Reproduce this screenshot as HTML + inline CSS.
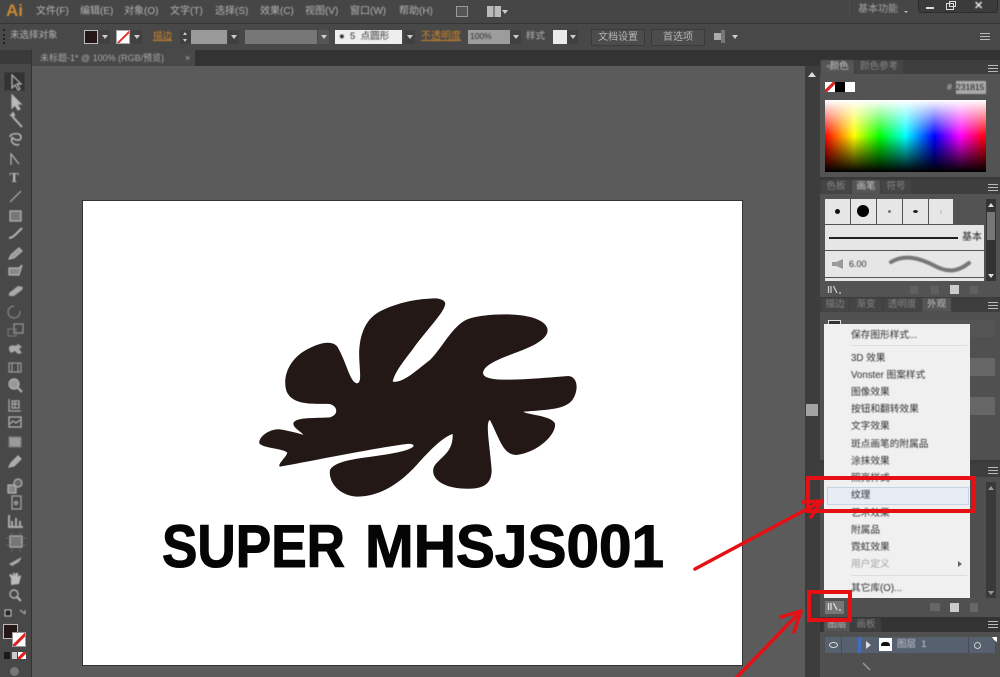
<!DOCTYPE html>
<html lang="zh"><head><meta charset="utf-8"><title>Illustrator</title>
<style>
html,body{margin:0;padding:0;background:#5b5b5b}
#r{position:relative;width:1000px;height:677px;overflow:hidden;background:#5b5b5b;font-family:"Liberation Sans","Noto Sans CJK SC",sans-serif;font-size:10px;color:#b4b4b4}
#r div{position:absolute;box-sizing:border-box}
.t{white-space:nowrap;line-height:12px;filter:blur(.45px)}
.o{color:#c8842c;text-decoration:underline}
.dd{background:#404040;height:14px;width:11px}
.dd:after{content:"";position:absolute;left:3px;top:5px;border:3px solid transparent;border-top:4px solid #ccc;border-bottom:0}
.m{left:851px;color:#2e2e2e;font-size:9.7px;white-space:nowrap;line-height:12px;filter:blur(.4px)}
.tab{height:14px;line-height:14px;text-align:center;color:#848484;font-size:9.5px;background:#454545;filter:blur(.4px)}
.on{background:#555;color:#c4c4c4}
.ml{width:10px;height:7px;border-top:1px solid #bbb;border-bottom:1px solid #bbb}
.ml:after{content:"";position:absolute;left:0;right:0;top:2px;height:1px;background:#bbb}
.btn{height:17px;background:#4c4c4c;border:1px solid #3a3a3a;text-align:center;line-height:15px;color:#b4b4b4;font-size:10px}
.cell{background:#e6e6e6}
</style></head><body><div id="r">

<!-- menu bar -->
<div style="left:0;top:0;width:1000px;height:23px;background:#464646"></div>
<div style="left:0;top:23px;width:1000px;height:1px;background:#353535"></div>
<div class="t" style="left:6px;top:1px;font-size:17px;line-height:20px;font-weight:bold;color:#c98a33">Ai</div>
<div class="t" style="left:36px;top:6px">文件(F)</div>
<div class="t" style="left:80px;top:6px">编辑(E)</div>
<div class="t" style="left:124px;top:6px">对象(O)</div>
<div class="t" style="left:170px;top:6px">文字(T)</div>
<div class="t" style="left:215px;top:6px">选择(S)</div>
<div class="t" style="left:260px;top:6px">效果(C)</div>
<div class="t" style="left:305px;top:6px">视图(V)</div>
<div class="t" style="left:350px;top:6px">窗口(W)</div>
<div class="t" style="left:399px;top:6px">帮助(H)</div>
<div style="left:456px;top:6px;width:12px;height:11px;border:1px solid #999;background:#555"></div>
<div style="left:487px;top:6px;width:14px;height:11px;background:linear-gradient(90deg,#bbb 45%,#444 45%,#444 55%,#bbb 55%)"></div>
<div style="left:502px;top:10px;border:3px solid transparent;border-top:4px solid #ccc;border-bottom:0"></div>
<div class="t" style="left:858px;top:4px;color:#a5a5a5">基本功能</div>
<div style="left:904px;top:11px;border:2px solid transparent;border-top:2px solid #bbb;border-bottom:0"></div>
<div style="left:849px;top:0;width:1px;height:16px;background:#4f4f4f"></div>
<div style="left:918px;top:0;width:80px;height:13px;background:#3b3b3b;border:1px solid #2c2c2c;border-top:0;border-radius:0 0 3px 3px"></div>
<div style="left:926px;top:7px;width:8px;height:2px;background:#ddd"></div>
<div style="left:946px;top:3px;width:8px;height:7px;border:1px solid #ddd"></div>
<div style="left:949px;top:1px;width:7px;height:6px;border:1px solid #ddd"></div>
<div class="t" style="left:974px;top:0;color:#e6e6e6;font-weight:bold;font-size:11px">✕</div>

<!-- control bar -->
<div style="left:0;top:24px;width:1000px;height:26px;background:#484848"></div>
<div style="left:3px;top:29px;width:2px;height:15px;border-left:2px dotted #222"></div>
<div class="t" style="left:10px;top:30px;font-size:9.5px">未选择对象</div>
<div style="left:84px;top:30px;width:14px;height:14px;background:#231815;border:1px solid #bbb"></div>
<div class="dd" style="left:99px;top:30px"></div>
<div style="left:116px;top:30px;width:14px;height:14px;background:#fff;border:1px solid #aaa;overflow:hidden"><div style="left:-3px;top:5px;width:20px;height:2px;background:#d33;transform:rotate(-45deg)"></div></div>
<div class="dd" style="left:131px;top:30px"></div>
<div class="t o" style="left:153px;top:31px;font-size:9.5px">描边</div>
<div style="left:180px;top:30px;width:11px;height:14px;background:#404040"></div>
<div style="left:183px;top:32px;border:2px solid transparent;border-bottom:3px solid #ccc;border-top:0"></div>
<div style="left:183px;top:39px;border:2px solid transparent;border-top:3px solid #ccc;border-bottom:0"></div>
<div style="left:191px;top:30px;width:36px;height:14px;background:#999"></div>
<div class="dd" style="left:228px;top:30px"></div>
<div style="left:245px;top:30px;width:72px;height:14px;background:#777"></div>
<div class="dd" style="left:318px;top:30px;background:#555"></div>
<div style="left:335px;top:30px;width:67px;height:14px;background:#eee"></div>
<div class="t" style="left:339px;top:31px;color:#333;font-size:9.5px">●&nbsp; 5&nbsp; 点圆形</div>
<div class="dd" style="left:404px;top:30px"></div>
<div class="t o" style="left:421px;top:31px;font-size:10px">不透明度</div>
<div style="left:468px;top:30px;width:42px;height:14px;background:#9c9c9c"></div>
<div class="t" style="left:470px;top:30px;color:#333;font-size:8.5px">100%</div>
<div class="dd" style="left:510px;top:30px"></div>
<div class="t" style="left:526px;top:31px;font-size:9.5px">样式</div>
<div style="left:553px;top:30px;width:14px;height:14px;background:#eaeaea"></div>
<div class="dd" style="left:567px;top:30px"></div>
<div class="btn" style="left:591px;top:29px;width:54px">文档设置</div>
<div class="btn" style="left:651px;top:29px;width:54px">首选项</div>
<div style="left:714px;top:33px;width:8px;height:7px;background:#aaa"></div>
<div style="left:721px;top:30px;width:4px;height:13px;background:#777"></div>
<div style="left:732px;top:35px;border:3px solid transparent;border-top:4px solid #ccc;border-bottom:0"></div>
<div class="ml" style="left:980px;top:33px"></div>

<!-- tab bar -->
<div style="left:0;top:50px;width:1000px;height:16px;background:#333"></div>
<div style="left:32px;top:50px;width:163px;height:16px;background:#484848"></div>
<div class="t" style="left:40px;top:52px;font-size:9px;color:#aaa">未标题-1* @ 100% (RGB/预览)</div>
<div class="t" style="left:185px;top:52px;font-size:9px;color:#aaa">×</div>

<!-- left toolbar -->
<div style="left:0;top:50px;width:32px;height:627px;background:#484848;border-right:1px solid #333"></div>
<div style="left:0;top:50px;width:31px;height:14px;background:#3a3a3a"></div>
<div style="left:4px;top:72px;width:21px;height:19px;background:#333;border:1px solid #3c3c3c"></div>
<svg style="position:absolute;left:0;top:60px;filter:blur(.45px)" width="32" height="617" viewBox="0 60 32 617" fill="none" stroke="#b5b5b5" stroke-width="1.2">
<path d="M12 75v13l3-3 3 5 2-1-3-5h4z" stroke="#bbb" fill="#333"/>
<path d="M12 95v13l3-3 3 5 2-1-3-5h4z" fill="#bbb"/>
<path d="M12 116l10 11M10 115h5M13 112v5" stroke-width="2"/>
<path d="M10 137c0-4 11-5 11 0s-7 3-8 1-3 4 1 6 5 0 5 0" stroke-width="1.6"/>
<path d="M11 165v-11l8 10"/>
<text x="9.5" y="182" font-family="Liberation Serif" font-size="14" font-weight="bold" fill="#bbb" stroke="none">T</text>
<path d="M10 202l11-11"/>
<rect x="10" y="211" width="11" height="10" fill="#777"/>
<path d="M9 238c4 0 4-2 6-3l7-7" stroke-width="2"/>
<path d="M9 259l2-4 8-7 3 3-8 7z" fill="#999"/>
<path d="M9 268h10l3-3-3 10H9z" fill="#888"/>
<path d="M9 293l9-7 5 1-1 3-8 6H9z" fill="#aaa" stroke="none"/>
<path d="M20 311a6 6 0 1 1-6-5" stroke="#888"/>
<rect x="14" y="324" width="9" height="9" stroke="#999"/><rect x="8" y="329" width="8" height="7" stroke="#777"/>
<path d="M9 347c3-4 6 1 9-3l4 3-3 2 3 4-4 1-3-3-4 2-2-3z" fill="#aaa" stroke="none"/>
<path d="M9 363h12v9H9zM12 363v9M18 363v9" stroke="#999"/>
<circle cx="14" cy="384" r="5" fill="#999"/><path d="M18 388l4 4" stroke-width="2"/>
<path d="M9 399v12h12M12 401h7v7h-7zM15 401v7M12 404h7" stroke="#aaa"/>
<rect x="9" y="417" width="12" height="10" stroke="#bbb"/><path d="M10 424l3-3 3 2 4-3"/>
<rect x="9" y="437" width="12" height="10" fill="#9a9a9a" stroke="#777"/>
<path d="M9 467l2-4 7-7 3 3-7 7z" fill="#aaa"/>
<rect x="8" y="485" width="8" height="8" fill="#888"/><circle cx="18" cy="483" r="4" fill="#666"/>
<rect x="12" y="496" width="9" height="13" stroke="#aaa"/><circle cx="16" cy="503" r="1.5"/>
<path d="M9 515v12h14M12 526v-5M16 526v-8M20 526v-5" stroke-width="2" stroke="#aaa"/>
<rect x="10" y="536" width="12" height="11" fill="#777"/><path d="M6 538h20M6 545h20M12 532v20M20 532v20" stroke="#777" stroke-width=".7"/>
<path d="M9 564l9-5 4-2-3 5-7 4z" fill="#aaa" stroke="none"/>
<path d="M11 585v-7l-2-3 2-1 2 2v-3h2v3l1-3h2v4l2-2 1 1-2 8z" fill="#bbb" stroke="none"/>
<circle cx="14" cy="594" r="4" stroke-width="1.4"/><path d="M17 597l4 4" stroke-width="2"/>
<rect x="5" y="610" width="6" height="6" fill="#222" stroke="#ddd" stroke-width=".9"/><path d="M20 610l5 4M25 610v4" stroke="#aaa"/>
</svg>
<div style="left:3px;top:624px;width:15px;height:15px;background:#231815;border:1px solid #bbb"></div>
<div style="left:12px;top:632px;width:14px;height:15px;background:#fff;border:1px solid #999;overflow:hidden"><div style="left:-3px;top:5px;width:20px;height:3px;background:#d22;transform:rotate(-45deg)"></div></div>
<div style="left:4px;top:652px;width:6px;height:7px;background:#1a1a1a"></div>
<div style="left:12px;top:652px;width:5px;height:7px;background:#ccc"></div>
<div style="left:18px;top:652px;width:8px;height:7px;background:linear-gradient(135deg,#fff 35%,#d22 35%,#d22 65%,#fff 65%)"></div>
<div style="left:10px;top:667px;width:9px;height:9px;border-radius:50%;background:#777"></div>

<!-- document area -->
<div style="left:32px;top:66px;width:773px;height:611px;background:#5b5b5b"></div>
<div style="left:83px;top:201px;width:659px;height:464px;background:#fff;box-shadow:0 0 0 1px #333"></div>
<svg style="position:absolute;left:83px;top:201px" width="659" height="464" viewBox="83 201 659 464">
<g transform="translate(240 280) scale(.33333)">
<path fill="#231815" d="M615 75C610 100 560 150 520 205C490 245 465 275 458 305C490 310 530 270 570 240C610 200 640 130 690 115C740 100 860 95 905 125C935 145 925 170 890 190C850 215 760 235 735 265C720 285 735 295 770 298C830 302 930 292 985 288C1010 290 1015 320 1005 345C990 385 950 388 850 395C860 405 930 405 945 430C950 460 900 515 830 525C790 525 780 480 750 420C735 425 750 500 755 570C755 620 720 630 660 625C600 620 570 590 582 560C600 530 640 520 638 462C610 470 570 510 530 555C480 610 420 650 350 650C290 645 265 600 270 570C290 530 420 535 500 510C530 500 525 490 500 492C400 505 230 540 120 560C110 555 140 530 142 518C130 505 70 505 58 490C55 470 90 445 120 448C145 452 180 460 190 465C185 455 160 445 160 430C165 410 230 415 270 412C295 405 295 380 270 372C230 370 160 380 140 335C125 290 150 240 190 215C230 190 280 175 295 205C320 250 330 305 350 310C365 310 360 280 358 240C355 190 365 130 410 100C460 70 530 55 590 55C610 58 618 65 615 75Z"/>
</g>
<g font-family="Liberation Sans" font-weight="bold" font-size="60" fill="#050505" stroke="#050505" stroke-width="1.1">
<text x="162" y="567" textLength="183" lengthAdjust="spacingAndGlyphs">SUPER</text>
<text x="365" y="567" textLength="299" lengthAdjust="spacingAndGlyphs">MHSJS001</text>
</g>
</svg>

<!-- vertical scrollbar -->
<div style="left:805px;top:66px;width:15px;height:611px;background:#3d3d3d"></div>
<div style="left:808px;top:72px;border:4px solid transparent;border-bottom:5px solid #ddd;border-top:0"></div>
<div style="left:806px;top:404px;width:12px;height:12px;background:#a3a3a3"></div>

<!-- right dock -->
<div style="left:820px;top:50px;width:180px;height:627px;background:#3a3a3a"></div>
<div style="left:820px;top:50px;width:180px;height:10px;background:#333"></div>

<!-- colour panel -->
<div style="left:820px;top:60px;width:180px;height:14px;background:#3e3e3e"></div>
<div class="tab on" style="left:821px;top:60px;width:33px">▫颜色</div>
<div class="tab" style="left:855px;top:60px;width:48px">颜色参考</div>
<div class="ml" style="left:988px;top:65px"></div>
<div style="left:820px;top:74px;width:180px;height:103px;background:#535353"></div>
<div style="left:825px;top:82px;width:10px;height:10px;background:linear-gradient(135deg,#fff 38%,#d22 38%,#d22 62%,#fff 62%)"></div>
<div style="left:835px;top:82px;width:10px;height:10px;background:#000"></div>
<div style="left:845px;top:82px;width:10px;height:10px;background:#fff"></div>
<div class="t" style="left:947px;top:81px;font-size:9px;color:#ccc">#</div>
<div class="t" style="left:956px;top:81px;width:30px;height:13px;background:#aaa;color:#222;font-size:8.5px;overflow:hidden">231815</div>
<div style="left:825px;top:100px;width:161px;height:72px;background:linear-gradient(180deg,#fff 0%,rgba(255,255,255,0) 50%,rgba(0,0,0,0) 50%,#000 100%),linear-gradient(90deg,#f00,#ff0 18%,#0f0 34%,#0ff 50%,#00f 68%,#f0f 84%,#f00)"></div>

<!-- brush panel -->
<div style="left:820px;top:180px;width:180px;height:14px;background:#3e3e3e"></div>
<div class="tab" style="left:821px;top:180px;width:30px">色板</div>
<div class="tab on" style="left:852px;top:180px;width:28px">画笔</div>
<div class="tab" style="left:881px;top:180px;width:30px">符号</div>
<div class="ml" style="left:988px;top:184px"></div>
<div style="left:820px;top:194px;width:180px;height:103px;background:#535353"></div>
<div class="cell" style="left:825px;top:199px;width:25px;height:25px"></div>
<div class="cell" style="left:851px;top:199px;width:25px;height:25px"></div>
<div class="cell" style="left:877px;top:199px;width:25px;height:25px"></div>
<div class="cell" style="left:903px;top:199px;width:25px;height:25px"></div>
<div class="cell" style="left:929px;top:199px;width:24px;height:25px"></div>
<div style="left:835px;top:209px;width:5px;height:5px;border-radius:50%;background:#111"></div>
<div style="left:857px;top:205px;width:12px;height:12px;border-radius:50%;background:#000"></div>
<div style="left:888px;top:210px;width:3px;height:3px;border-radius:50%;background:#777"></div>
<div style="left:913px;top:210px;width:5px;height:3px;border-radius:50%;background:#222"></div>
<div style="left:940px;top:210px;width:2px;height:4px;background:#ccc"></div>
<div class="cell" style="left:825px;top:225px;width:159px;height:25px"></div>
<div style="left:829px;top:237px;width:129px;height:1.5px;background:#222"></div>
<div class="t" style="left:962px;top:232px;color:#222">基本</div>
<div class="cell" style="left:825px;top:251px;width:159px;height:26px"></div>
<div class="t" style="left:849px;top:258px;color:#333;font-size:9px">6.00</div>
<div style="left:832px;top:259px;width:11px;height:10px;background:#999;clip-path:polygon(0 30%,40% 30%,100% 0,100% 100%,40% 70%,0 70%)"></div>
<svg style="position:absolute;left:885px;top:252px;filter:blur(.5px)" width="90" height="24" fill="none"><path d="M6 10C20 2 35 6 50 14S75 18 84 11" stroke="#777" stroke-width="4" stroke-linecap="round"/></svg>
<div class="cell" style="left:825px;top:278px;width:159px;height:3px"></div>
<div style="left:986px;top:199px;width:10px;height:82px;background:#333"></div>
<div style="left:987px;top:212px;width:8px;height:28px;background:#777"></div>
<div style="left:988px;top:203px;border:3px solid transparent;border-bottom:4px solid #ddd;border-top:0"></div>
<div style="left:988px;top:274px;border:3px solid transparent;border-top:4px solid #ddd;border-bottom:0"></div>
<svg style="position:absolute;left:827px;top:285px" width="15" height="10" fill="none" stroke="#ccc" stroke-width="1.3"><path d="M1.5 1v7M4 1v7M6.5 1l3.5 7M12 8h2"/></svg>
<div style="left:950px;top:285px;width:9px;height:9px;background:#ccc"></div>
<div style="left:910px;top:286px;width:8px;height:8px;background:#5f5f5f"></div>
<div style="left:931px;top:286px;width:8px;height:8px;background:#5f5f5f"></div>
<div style="left:970px;top:286px;width:8px;height:8px;background:#5f5f5f"></div>

<!-- appearance panel -->
<div style="left:820px;top:298px;width:180px;height:14px;background:#3e3e3e"></div>
<div class="tab" style="left:821px;top:298px;width:28px">描边</div>
<div class="tab" style="left:850px;top:298px;width:32px">渐变</div>
<div class="tab" style="left:883px;top:298px;width:38px">透明度</div>
<div class="tab on" style="left:922px;top:298px;width:29px">外观</div>
<div class="ml" style="left:988px;top:302px"></div>
<div style="left:820px;top:312px;width:180px;height:148px;background:#505050"></div>
<div style="left:825px;top:320px;width:170px;height:17px;background:#555"></div>
<div style="left:970px;top:358px;width:25px;height:18px;background:#666"></div>
<div style="left:970px;top:397px;width:25px;height:18px;background:#666"></div>
<div style="left:828px;top:320px;width:13px;height:6px;border:1px solid #ddd;border-bottom:0;background:#333"></div>

<!-- library panel -->
<div style="left:820px;top:463px;width:180px;height:14px;background:#3e3e3e"></div>
<div class="ml" style="left:988px;top:467px"></div>
<div style="left:820px;top:477px;width:180px;height:123px;background:#4f4f4f"></div>
<div style="left:986px;top:482px;width:10px;height:116px;background:#3a3a3a"></div>
<div style="left:988px;top:486px;border:3px solid transparent;border-bottom:4px solid #999;border-top:0"></div>
<div style="left:988px;top:591px;border:3px solid transparent;border-top:4px solid #999;border-bottom:0"></div>
<div style="left:820px;top:598px;width:180px;height:19px;background:#505050"></div>
<div style="left:825px;top:601px;width:19px;height:13px;background:#777"></div>
<svg style="position:absolute;left:827px;top:602px" width="15" height="10" fill="none" stroke="#ddd" stroke-width="1.3"><path d="M1.5 1v7M4 1v7M6.5 1l3.5 7M12 8h2"/></svg>
<div style="left:930px;top:603px;width:10px;height:8px;background:#666"></div>
<div style="left:950px;top:603px;width:9px;height:9px;background:#ccc"></div>
<div style="left:970px;top:603px;width:8px;height:9px;background:#666"></div>

<!-- layers panel -->
<div style="left:820px;top:617px;width:180px;height:15px;background:#333"></div>
<div class="tab on" style="left:824px;top:618px;width:26px">图层</div>
<div class="tab" style="left:851px;top:618px;width:30px;background:#3e3e3e">画板</div>
<div class="ml" style="left:988px;top:621px"></div>
<div style="left:820px;top:632px;width:180px;height:45px;background:#505050"></div>
<div style="left:825px;top:637px;width:170px;height:16px;background:#56606f"></div>
<div style="left:841px;top:637px;width:1px;height:16px;background:#454c57"></div>
<div style="left:858px;top:637px;width:3px;height:16px;background:#3f6fc2"></div>
<div style="left:866px;top:641px;border:4px solid transparent;border-left:5px solid #ddd;border-right:0"></div>
<div style="left:879px;top:638px;width:13px;height:13px;background:#fff"></div>
<div style="left:881px;top:642px;width:9px;height:4px;border-radius:4px 4px 1px 1px;background:#111"></div>
<div class="t" style="left:897px;top:639px;font-size:9.5px;color:#c5cad2">图层 &nbsp;1</div>
<div style="left:968px;top:637px;width:1px;height:16px;background:#454c57"></div>
<div style="left:974px;top:642px;width:7px;height:7px;border:1px solid #ccc;border-radius:50%"></div>
<div style="left:829px;top:642px;width:9px;height:6px;border:1px solid #ddd;border-radius:50%"></div>
<div style="left:992px;top:637px;border:2px solid transparent;border-top:3px solid #fff;border-right:3px solid #fff"></div>
<svg style="position:absolute;left:860px;top:660px" width="12" height="12"><path d="M3 3l7 7" stroke="#999" stroke-width="1.4"/></svg>

<!-- popup menu -->
<div style="left:824px;top:324px;width:146px;height:274px;background:#f0f0f0"></div>
<div class="m" style="top:330px">保存图形样式...</div>
<div style="left:851px;top:345px;width:116px;height:1px;background:#ddd"></div>
<div class="m" style="top:353px">3D 效果</div>
<div class="m" style="top:370px">Vonster 图案样式</div>
<div class="m" style="top:387px">图像效果</div>
<div class="m" style="top:404px">按钮和翻转效果</div>
<div class="m" style="top:421px">文字效果</div>
<div class="m" style="top:439px">斑点画笔的附属品</div>
<div class="m" style="top:456px">涂抹效果</div>
<div class="m" style="top:473px">照亮样式</div>
<div style="left:827px;top:487px;width:142px;height:18px;background:#e8edf5;border:1px solid #c6d3e6"></div>
<div class="m" style="top:490px">纹理</div>
<div class="m" style="top:508px">艺术效果</div>
<div class="m" style="top:525px">附属品</div>
<div class="m" style="top:542px">霓虹效果</div>
<div class="m" style="top:559px;color:#a0a0a0">用户定义</div>
<div style="left:958px;top:561px;border:3px solid transparent;border-left:4px solid #666;border-right:0"></div>
<div style="left:851px;top:575px;width:116px;height:1px;background:#ddd"></div>
<div class="m" style="top:583px">其它库(O)...</div>

<!-- red annotations -->
<div style="left:806px;top:476px;width:170px;height:37px;border:4px solid #e60f14"></div>
<div style="left:807px;top:590px;width:45px;height:32px;border:4px solid #e60f14"></div>
<svg style="position:absolute;left:0;top:0" width="1000" height="677" fill="none" stroke="#e60f14" stroke-width="3.5" stroke-linecap="round" stroke-linejoin="round">
<path d="M695 569L822 501M803 502L822 501L811 517"/>
<path d="M737 677L801 611M781 617L801 611L794 632"/>
</svg>
</div></body></html>
